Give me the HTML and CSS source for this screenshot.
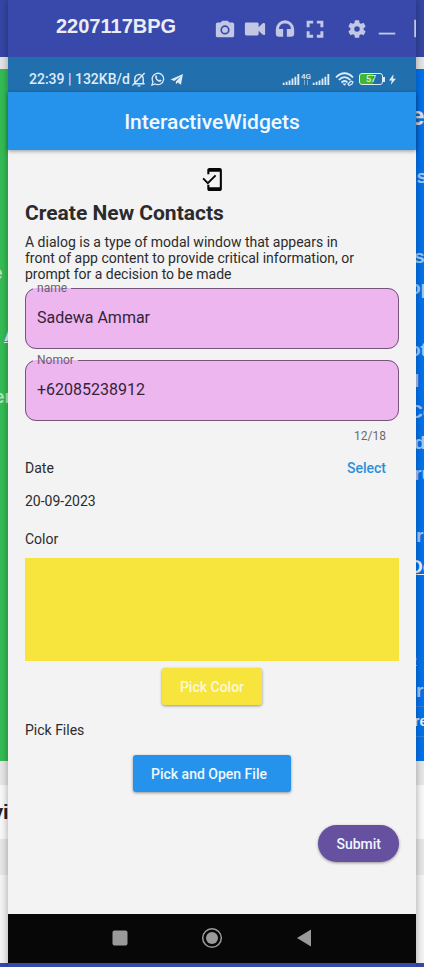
FILE: index.html
```html
<!DOCTYPE html>
<html lang="en">
<head>
<meta charset="utf-8">
<meta name="viewport" content="width=device-width, initial-scale=1">
<title>InteractiveWidgets</title>
<link rel="stylesheet" href="styles.css">
</head>
<body>
<div class="desktop">
  <aside class="side side-left">
    <div class="side-bar"></div>
    <div class="side-gap"></div>
    <div class="side-panel green">
      <p class="end">e</p>
      <p></p>
      <p class="bright"><u>A</u></p>
      <p></p>
      <p>er</p>
    </div>
    <div class="side-band"></div>
    <div class="side-card">vi</div>
    <div class="side-band wide"></div>
    <div class="side-rest"></div>
    <div class="side-foot"></div>
  </aside>

  <main class="phone">
    <header class="window-bar">
      <h1 class="window-title">2207117BPG</h1>
      <div class="window-tools">
        <button class="tool" aria-label="Screenshot"><svg viewBox="0 0 24 24"><path fill-rule="evenodd" d="M9 3 7.200 5H4a2 2 0 0 0-2 2v12c0 1.100.9 2 2 2h16a2 2 0 0 0 2-2V7a2 2 0 0 0-2-2h-3.200L15 3zm3 5a5 5 0 1 1 0 10 5 5 0 0 1 0-10z"/><circle cx="12" cy="13" r="3.200"/></svg></button>
        <button class="tool" aria-label="Record"><svg viewBox="0 0 24 24"><path d="M2 5h12.500q1.500 0 1.500 1.500V10l3.500-3.500q1-1 2-1T23 6v12q-.5.8-1.500.5t-2-1L16 14v3.500q0 1.500-1.500 1.500H2.500Q1 19 1 17.500v-11Q1 5 2 5z"/></svg></button>
        <button class="tool" aria-label="Audio"><svg viewBox="0 0 24 24"><path d="M12 2.500A10 10 0 0 0 2 12.500V17c0 2.500 1 3.500 3.500 3.500H10V12H5.500C5.500 8 8.500 6 12 6s6.500 2 6.500 6H14v8.500h4.500c2.500 0 3.500-1 3.500-3.500v-4.500a10 10 0 0 0-10-10z"/></svg></button>
        <button class="tool" aria-label="Full screen"><svg viewBox="0 0 24 24"><path fill="none" stroke="currentColor" stroke-width="3.200" d="M4.500 10V4.500H10M14 4.500h5.500V10M19.500 14.500V20H14M10 20H4.500v-5.500"/></svg></button>
        <button class="tool spaced" aria-label="Settings"><svg viewBox="0 0 24 24"><path d="M19.140 12.940c.04-.3.060-.61.060-.94 0-.32-.02-.64-.07-.94l2.030-1.580a.49.49 0 0 0 .12-.61l-1.920-3.320a.488.488 0 0 0-.59-.22l-2.390.96c-.5-.38-1.030-.7-1.620-.94l-.36-2.540a.484.484 0 0 0-.48-.41h-3.840c-.24 0-.43.17-.47.41l-.36 2.540c-.59.24-1.130.57-1.620.94l-2.390-.96c-.22-.08-.47 0-.59.22L2.740 8.870c-.12.21-.08.47.12.61l2.030 1.580c-.05.3-.09.63-.09.94s.02.64.07.94l-2.030 1.580a.49.49 0 0 0-.12.61l1.920 3.320c.12.22.37.29.59.22l2.390-.96c.5.38 1.030.7 1.620.94l.36 2.540c.05.24.24.41.48.41h3.840c.24 0 .44-.17.47-.41l.36-2.540c.59-.24 1.130-.56 1.620-.94l2.390.96c.22.08.47 0 .59-.22l1.920-3.320c.12-.22.07-.47-.12-.61l-2.010-1.580zM12 15a3 3 0 1 1 0-6 3 3 0 0 1 0 6z"/></svg></button>
        <button class="tool" aria-label="Minimize"><svg viewBox="0 0 24 24"><path d="M3 16h18v2H3z"/></svg></button>
        <button class="tool" aria-label="Maximize"><svg viewBox="0 0 24 24"><path fill="none" stroke="currentColor" stroke-width="2" d="M10 3h14v17H10z"/></svg></button>
      </div>
    </header>

    <div class="status-bar">
      <span class="clock">22:39 | 132KB/d</span>
      <svg class="status-icon bell" viewBox="0 0 14 16"><path fill="none" stroke="currentColor" stroke-width="1.500" d="M1 12.500h12M2.500 12V7.500C2.500 4 4 3 7 2.500c3 .5 4.500 1.500 4.500 5V12M0 14.500 13 1M5.500 14.800h3"/></svg>
      <svg class="status-icon chat" viewBox="0 0 14 14"><path fill="none" stroke="currentColor" stroke-width="1.300" d="M1 13l1-3.200A5.700 5.700 0 1 1 4.300 12z"/><path d="M4.400 3.700c.8-.8 1.300-.3 1.800 1.200L5.600 6c.6 1 1.400 1.700 2.500 2.200l.9-.8c1.800.6 1.900 1.100 1.200 1.900C8.300 11.200 3 7.200 4.400 3.700z"/></svg>
      <svg class="status-icon plane" viewBox="0 0 14 12"><path d="M13.500 0 0 6l4 1.600L11 2.500 5.800 8.300v3l2-2.100 3.500 2.600z"/></svg>
      <span class="status-space"></span>
      <svg class="signal" viewBox="0 0 18 12"><path d="M0 9.500h2V12H0zM3.200 8.500h2V12h-2zM6.400 7h2v5h-2zM9.600 5h2v7h-2zM12.800 3h2v9h-2zM16 0h2v12h-2z"/></svg>
      <span class="network"><span>4G</span><svg viewBox="0 0 6 5"><path d="M1.500 0v5M4.500 0v5" stroke="currentColor" opacity=".5"/></svg></span>
      <svg class="signal" viewBox="0 0 18 12"><path d="M0 9.500h2V12H0zM3.200 8.500h2V12h-2zM6.400 7h2v5h-2zM9.600 5h2v7h-2zM12.800 3h2v9h-2zM16 0h2v12h-2z"/></svg>
      <svg class="wifi" viewBox="0 0 19 14"><path fill="none" stroke="currentColor" stroke-width="1.800" d="M1 5.500C6-.2 13-.2 18 5.500M3.800 8c3.500-3.900 8-3.900 11.500 0M6.500 10.500c2-2 4.200-2 6 0"/><path d="M7.500 11.500h4l-2 2.200z"/><path fill="none" stroke="currentColor" stroke-width="1.200" d="m13 12 3-3 2 1-1 2-3 1.500z"/></svg>
      <span class="battery"><span class="battery-body">57</span></span>
      <svg class="bolt" viewBox="0 0 8 12"><path d="M5 0 0 7h3.200L2 12l6-7H4.800z"/></svg>
    </div>

    <div class="app-bar"><h2>InteractiveWidgets</h2></div>

    <form class="content">
      <svg class="hero" viewBox="0 0 24 24"><path d="M21 3v18c0 1.100-.9 2-2 2H9c-1.100 0-2-.9-2-2v-4h2v2.500h10v-15H9V7H7V3c0-1.100.9-2 2-2h10c1.100 0 2 .9 2 2z"/><path fill="none" stroke="currentColor" stroke-width="1.800" d="m3 11 4.500 4.500L15 8"/></svg>
      <h3 class="heading">Create New Contacts</h3>
      <p class="intro">A dialog is a type of modal window that appears in front of app content to provide critical information, or prompt for a decision to be made</p>
      <fieldset class="field">
        <legend><label for="name">name</label></legend>
        <input id="name" type="text" value="Sadewa Ammar">
      </fieldset>
      <fieldset class="field">
        <legend><label for="nomor">Nomor</label></legend>
        <input id="nomor" type="tel" maxlength="18" value="+62085238912">
      </fieldset>
      <p class="counter">12/18</p>
      <div class="row"><span>Date</span><button type="button" class="link-button">Select</button></div>
      <p class="text date">20-09-2023</p>
      <p class="text">Color</p>
      <div class="swatch"></div>
      <button type="button" class="button yellow">Pick Color</button>
      <p class="text files">Pick Files</p>
      <button type="button" class="button blue">Pick and Open File</button>
      <button type="submit" class="button submit">Submit</button>
    </form>

    <nav class="nav-bar">
      <button aria-label="Recents"><svg viewBox="0 0 24 24"><rect x="4.500" y="4.500" width="15" height="15" rx="2"/></svg></button>
      <button aria-label="Home"><svg viewBox="0 0 24 24"><circle cx="12" cy="12" r="9.300" fill="none" stroke="currentColor" stroke-width="1.500"/><circle cx="12" cy="12" r="6"/></svg></button>
      <button aria-label="Back"><svg viewBox="0 0 24 24"><path d="M19 3.500v17L5 12z"/></svg></button>
    </nav>
    <div class="window-foot"></div>
  </main>

  <aside class="side side-right">
    <div class="side-bar"></div>
    <div class="side-gap"></div>
    <div class="side-panel blue-panel">
      <p class="brand">e</p>
      <p class="tagline">es</p>
      <p class="cut">s</p>
      <p class="deep">op</p>
      <p></p>
      <p class="deep">ot</p>
      <p class="cut">l</p>
      <p class="deep">Co</p>
      <p class="cut">d</p>
      <p class="cut">ru</p>
      <p></p>
      <p>r</p>
      <p class="bright deep"><u>De</u></p>
      <p></p>
      <p></p>
      <p class="small deep"><u>e</u></p>
      <p>r</p>
      <p class="bright small ruled">re</p>
    </div>
    <div class="side-band"></div>
    <div class="side-card"></div>
    <div class="side-band wide"></div>
    <div class="side-rest"></div>
    <div class="side-foot"></div>
  </aside>
</div>
</body>
</html>
```

FILE: styles.css
```css
* { box-sizing: border-box; }
body { margin: 0; font-family: Roboto, sans-serif; color: #2b2b2d; }
h1, h2, h3, p { margin: 0; }
button { border: 0; padding: 0; background: none; color: inherit; font: inherit; cursor: pointer; }
svg { display: block; fill: currentColor; }

.desktop { display: grid; grid-template-columns: 8px minmax(0, 1fr) 8px; min-height: 100vh; }

.side { display: flex; flex-direction: column; overflow: hidden; background: #fafafa; font-family: "Liberation Sans", sans-serif; }
.side-bar { height: 57px; background: #3546a5; }
.side-gap { height: 12px; background: #e6e6e6; }
.side-panel { height: 692px; font-size: 19px; line-height: 31px; font-weight: bold; color: rgba(255, 255, 255, .65); white-space: nowrap; }
.side-panel p { height: 31px; }
.side-panel .bright { color: #eef4fa; }
.side-panel .cut { text-indent: -2px; }
.side-panel .deep { text-indent: -7px; }
.side-panel .small { font-size: 14px; }
.side-panel .ruled { border: 1px solid #2b80e8; border-width: 1px 0; line-height: 28px; text-indent: -2px; }
.green { background: #34bd55; padding-top: 188px; }
.green p { text-indent: -6px; }
.green .end { text-indent: -8px; }
.green .bright { text-indent: 4px; }
.blue-panel { background: #0373ee; padding-top: 32px; }
.side-panel .brand { font-size: 26px; height: 60px; text-indent: -6px; color: #e0e0e0; }
.side-panel .tagline { height: 80px; text-indent: -10px; }
.side-band { height: 24px; background: #e8e8e8; }
.side-card { height: 54px; background: #fafafa; font-size: 20px; font-weight: bold; line-height: 54px; text-indent: -8px; color: #222; }
.wide { height: 36px; }
.side-rest { flex: 1; background: #f5f5f5; }
.side-foot { height: 4px; background: #3949ab; }

.phone { display: flex; flex-direction: column; position: relative; background: #f3f3f3; box-shadow: 0 0 8px rgba(0, 0, 0, .35); }

.window-bar { display: flex; align-items: center; height: 57px; padding-left: 48px; overflow: hidden; background: #3949ab; color: #c2c7e3; }
.window-title { flex: none; padding-bottom: 6px; font: bold 20px/24px "Liberation Sans", sans-serif; color: #ececf4; }
.window-tools { display: flex; margin-left: auto; margin-right: -16px; }
.tool { width: 30px; height: 24px; display: grid; place-items: center; }
.tool svg { width: 22px; height: 22px; }
.spaced { margin-left: 12px; }

.status-bar { display: flex; align-items: center; height: 35px; padding: 9px 20px 0 21px; background: #226fae; color: #deebf6; }
.clock { font-size: 14px; font-weight: 500; line-height: 16px; }
.status-icon { flex: none; margin-left: 5px; height: 14px; }
.bell { width: 14px; height: 15px; margin-left: 2px; }
.chat, .plane { width: 14px; }
.plane { height: 11px; }
.status-space { flex: 1; }
.signal { width: 18px; height: 11px; }
.network { display: flex; flex-direction: column; align-items: center; width: 12px; font-size: 8px; line-height: 7px; font-weight: 500; }
.network svg { width: 6px; height: 5px; }
.wifi { width: 19px; height: 14px; margin-left: 5px; }
.battery { display: flex; align-items: center; margin: 0 4px 0 5px; }
.battery::after { content: ""; width: 2px; height: 5px; background: currentColor; }
.battery-body { width: 24px; height: 12px; border: 1px solid currentColor; border-radius: 3px; background: linear-gradient(90deg, #44b728 57%, #226fae 57%); font-size: 9px; line-height: 10px; font-weight: 500; text-align: center; }
.bolt { width: 7px; height: 11px; }

.app-bar { display: grid; place-items: center; height: 58px; padding-top: 2px; background: #2593ec; color: #f2f8fd; box-shadow: 0 1px 4px rgba(0, 0, 0, .4); z-index: 1; }
.app-bar h2 { font-size: 21px; line-height: 24px; font-weight: 500; }

.content { flex: 1; display: flex; flex-direction: column; padding: 17px 17px 24px; font-size: 14px; line-height: 16px; }
.hero { width: 25px; height: 25px; align-self: center; color: #050505; }
.heading { margin: 8px 0; font-size: 21px; line-height: 26px; font-weight: 700; }
.intro { margin-bottom: -1px; padding-right: 30px; }
.field { height: 68px; margin: 0 0 4px; min-width: 0; padding: 0 11px; border: 1px solid #73567a; border-radius: 11px; background: #edb6ef; }
.field legend { margin-left: -4px; padding: 0 4px; color: #68606c; font-size: 12px; line-height: 14px; }
.field input { display: block; width: 100%; height: 44px; padding: 0; border: 0; outline: 0; background: none; font: 16px/20px Roboto, sans-serif; color: #33243a; }
.counter { margin: 3px 13px 0 0; text-align: right; color: #6b6b6b; font-size: 12px; }
.row { display: flex; justify-content: space-between; margin: 16px 13px 0 0; }
.link-button { color: #2a90dc; font-weight: 500; }
.date { margin: 17px 0 22px; }
.swatch { height: 103px; margin: 11px 0 7px; background: #f7e43c; }
.button { align-self: center; height: 37px; padding: 0 18px; border-radius: 3px; color: #f0f7fd; font-weight: 500; box-shadow: 0 1px 3px rgba(0, 0, 0, .4); }
.yellow { background: #f7e43c; color: #fbf9dc; }
.files { margin: 17px 0; }
.blue { padding-right: 24px; background: #2593ec; }
.submit { align-self: flex-end; margin-top: 33px; border-radius: 19px; background: #6650a0; }

.nav-bar { display: flex; justify-content: center; gap: 68px; height: 49px; padding-bottom: 2px; background: #070707; color: #9a9a9a; }
.nav-bar svg { width: 24px; height: 24px; }
.window-foot { height: 4px; background: #3949ab; }
```
